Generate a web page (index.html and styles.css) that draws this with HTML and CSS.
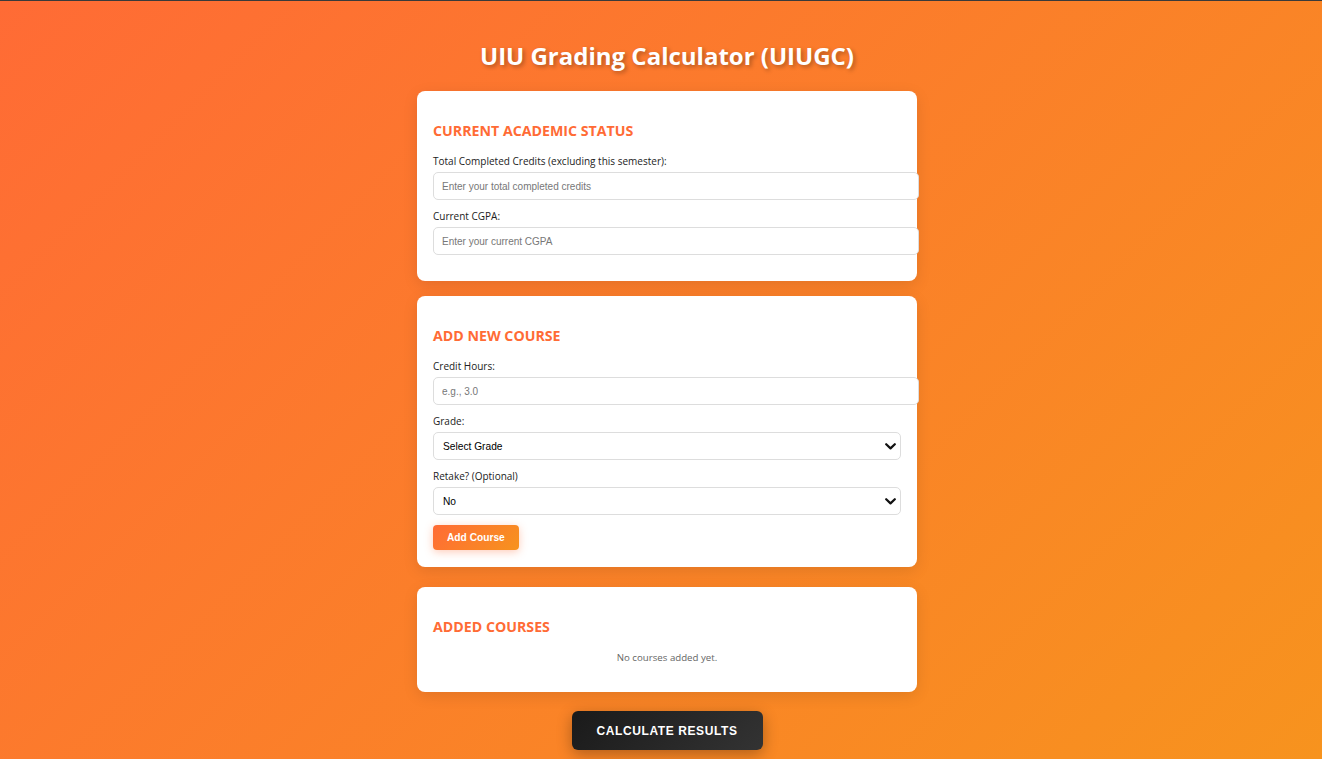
FILE: index.html
```html
<!DOCTYPE html>
<html lang="en">
<head>
<meta charset="utf-8">
<title>UIU Grading Calculator (UIUGC)</title>
<link rel="stylesheet" href="styles.css">
</head>
<body>
<div class="page">
  <h1 class="title">UIU Grading Calculator (UIUGC)</h1>

  <section class="card card-status">
    <h2 class="card-title">Current Academic Status</h2>
    <div class="group">
      <label class="label" for="credits">Total Completed Credits (excluding this semester):</label>
      <input class="input" id="credits" type="number" placeholder="Enter your total completed credits">
    </div>
    <div class="group">
      <label class="label" for="cgpa">Current CGPA:</label>
      <input class="input" id="cgpa" type="number" placeholder="Enter your current CGPA">
    </div>
  </section>

  <section class="card card-form">
    <h2 class="card-title">Add New Course</h2>
    <div class="group">
      <label class="label" for="hours">Credit Hours:</label>
      <input class="input" id="hours" type="number" placeholder="e.g., 3.0">
    </div>
    <div class="group">
      <label class="label" for="grade">Grade:</label>
      <div class="select-wrap">
        <select class="select" id="grade">
          <option>Select Grade</option>
          <option>A</option><option>A-</option><option>B+</option><option>B</option>
        </select>
        <svg class="chev" width="11" height="7" viewBox="0 0 11 7"><polyline points="1.2,1.2 5.5,5.4 9.8,1.2" fill="none" stroke="#111" stroke-width="2.2" stroke-linecap="round" stroke-linejoin="round"/></svg>
      </div>
    </div>
    <div class="group">
      <label class="label" for="retake">Retake? (Optional)</label>
      <div class="select-wrap">
        <select class="select" id="retake">
          <option>No</option><option>Yes</option>
        </select>
        <svg class="chev" width="11" height="7" viewBox="0 0 11 7"><polyline points="1.2,1.2 5.5,5.4 9.8,1.2" fill="none" stroke="#111" stroke-width="2.2" stroke-linecap="round" stroke-linejoin="round"/></svg>
      </div>
    </div>
    <button class="btn-add" type="button">Add Course</button>
  </section>

  <section class="card">
    <h2 class="card-title">Added Courses</h2>
    <p class="empty">No courses added yet.</p>
  </section>

  <button class="btn-calc" type="button">Calculate Results</button>
</div>
</body>
</html>
```

FILE: styles.css
```css
html, body {
  margin: 0;
  padding: 0;
}

body {
  min-height: 100vh;
  box-sizing: border-box;
  border-top: 1px solid #3a3a3a;
  background: linear-gradient(135deg, #ff6b35 0%, #f7931e 100%);
  font-family: "Open Sans", "Noto Sans", sans-serif;
  color: #333;
  overflow: hidden;
}

.page {
  display: flex;
  flex-direction: column;
  align-items: center;
  padding-left: 12px;
}

.title {
  margin: 38px 0 18px;
  font-size: 24px;
  line-height: 34px;
  font-weight: 700;
  color: #fff;
  text-shadow: 2px 2px 4px rgba(0, 0, 0, 0.3);
}

.card {
  width: 500px;
  box-sizing: border-box;
  padding: 16px 16px 17px;
  margin-bottom: 15px;
  background: #fff;
  border-radius: 8px;
  box-shadow: 0 4px 15px rgba(0, 0, 0, 0.1);
}

.card-status {
  padding-bottom: 16px;
}

.card-form {
  margin-bottom: 20px;
}

.card-title {
  margin: 14px 0 15px;
  font-size: 14.2px;
  line-height: 19px;
  font-weight: 700;
  color: #ff6b35;
  text-transform: uppercase;
}

.group {
  margin-bottom: 10px;
}

.label {
  display: block;
  margin-bottom: 4px;
  font-size: 10px;
  line-height: 13px;
  color: #222;
}

.input {
  display: block;
  width: 100%;
  height: 14px;
  padding: 6px 8px;
  border: 1px solid #ddd;
  border-radius: 5px;
  font-family: "Liberation Sans", Arial, sans-serif;
  font-size: 10px;
  color: #333;
  background: #fff;
  outline: none;
}

.input::placeholder {
  color: #777;
}

.select-wrap {
  position: relative;
}

.select {
  display: block;
  width: 100%;
  height: 28px;
  box-sizing: border-box;
  padding: 0 9px;
  border: 1px solid #ddd;
  border-radius: 5px;
  font-family: "Liberation Sans", Arial, sans-serif;
  font-size: 10.2px;
  color: #000;
  background: #fff;
  appearance: none;
  -webkit-appearance: none;
  outline: none;
}

.chev {
  position: absolute;
  right: 5px;
  top: 11px;
  pointer-events: none;
}

.btn-add {
  display: block;
  margin: 1px 0 0;
  height: 25px;
  padding: 0 14px;
  border: none;
  border-radius: 4px;
  background: linear-gradient(135deg, #ff6b35 0%, #f7931e 100%);
  color: #fff;
  font-family: "Liberation Sans", Arial, sans-serif;
  font-size: 10.2px;
  font-weight: 700;
  box-shadow: 0 2px 8px rgba(255, 107, 53, 0.35);
}

.empty {
  margin: 0 0 11px;
  text-align: center;
  font-size: 9.7px;
  line-height: 13px;
  color: #666;
}

.btn-calc {
  margin-top: 4px;
  width: 191px;
  height: 39px;
  border: none;
  border-radius: 6px;
  background: linear-gradient(135deg, #1a1a1a 0%, #333 100%);
  color: #fff;
  font-family: "Liberation Sans", Arial, sans-serif;
  font-size: 12px;
  font-weight: 700;
  letter-spacing: 0.6px;
  text-transform: uppercase;
  box-shadow: 0 4px 15px rgba(0, 0, 0, 0.3);
}
```
